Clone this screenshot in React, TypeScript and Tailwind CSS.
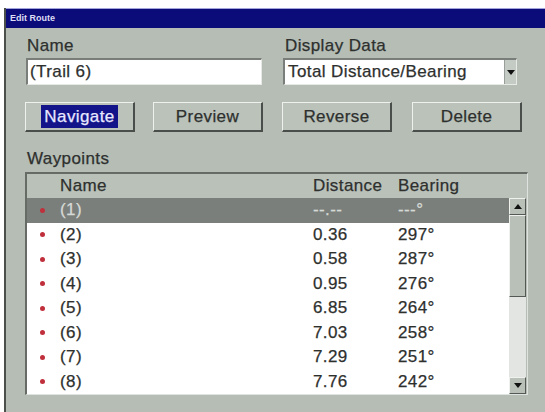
import React from 'react';

const waypoints = [
  { name: '(1)', dist: '--.--', bearing: '---°', selected: true },
  { name: '(2)', dist: '0.36', bearing: '297°' },
  { name: '(3)', dist: '0.58', bearing: '287°' },
  { name: '(4)', dist: '0.95', bearing: '276°' },
  { name: '(5)', dist: '6.85', bearing: '264°' },
  { name: '(6)', dist: '7.03', bearing: '258°' },
  { name: '(7)', dist: '7.29', bearing: '251°' },
  { name: '(8)', dist: '7.76', bearing: '242°' },
];

const Button = ({ label, focused }: { label: string; focused?: boolean }) => (
  <div className="flex h-[30px] w-[110px] items-center justify-center border-t border-l border-[#eef1ee] border-r-2 border-b-2 border-r-[#4a4e4a] border-b-[#4a4e4a] bg-[#bac2ba]">
    {focused ? (
      <span className="bg-[#14148a] px-[3px] leading-[23px] text-[#e8e8ff] [-webkit-text-stroke:0.25px_#e8e8ff]">{label}</span>
    ) : (
      <span className="leading-[23px]">{label}</span>
    )}
  </div>
);

const Arrow = ({ down }: { down?: boolean }) => (
  <svg width="8" height="5" viewBox="0 0 8 5">
    {down ? <path d="M0 0h8L4 5z" fill="#111" /> : <path d="M0 5h8L4 0z" fill="#111" />}
  </svg>
);

const ScrollButton = ({ down }: { down?: boolean }) => (
  <div className="flex h-[17px] items-center justify-center border-t border-l border-[#eef1ee] border-r border-b border-r-[#555955] border-b-[#555955] bg-[#b8c0b8]">
    <Arrow down={down} />
  </div>
);

export default function App() {
  return (
    <div className="h-[412px] w-[545px] overflow-hidden bg-white pt-[8px] pl-[4px] font-['Liberation_Sans',Arial,sans-serif]">
      <div className="flex h-full flex-col border-l-2 border-[#4b504b] bg-[#b5bdb5]">
        <div className="h-[20px] border-t border-[#a4a4dc] bg-[#0b0b7a] pl-[4px] text-[9px] font-bold leading-[19px] text-[#dcdcf4]">
          Edit Route
        </div>

        {/* dialog body: text is regular weight, thickened a little with a stroke */}
        <div className="pl-[19px] pr-[15px] pt-[8px] text-[17px] tracking-[0.4px] text-[#2e302e] [-webkit-text-stroke:0.25px_#2e302e]">
          <div className="flex">
            <div className="ml-[1px] w-[236px]">
              <div className="pl-[1px] leading-[20px]">Name</div>
              <div className="mt-[2px] h-[27px] border-t-2 border-l-2 border-[#7a7e7a] border-b border-r border-b-[#e6e9e6] border-r-[#e6e9e6] bg-white pl-[2px] leading-[24px]">
                (Trail 6)
              </div>
            </div>
            <div className="ml-[21px] w-[234px]">
              <div className="pl-[2px] leading-[20px]">Display Data</div>
              <div className="mt-[2px] flex h-[27px] border-t-2 border-l-2 border-[#7a7e7a] border-b border-r border-b-[#e6e9e6] border-r-[#e6e9e6] bg-white">
                <div className="flex-1 pl-[3px] leading-[24px]">Total Distance/Bearing</div>
                <div className="flex w-[12px] items-center justify-center border-l border-[#9a9e9a] bg-[#c4cac4]">
                  <Arrow down />
                </div>
              </div>
            </div>
          </div>

          <div className="mt-[17px] flex">
            <Button label="Navigate" focused />
            <div className="ml-[18px]">
              <Button label="Preview" />
            </div>
            <div className="ml-[19px]">
              <Button label="Reverse" />
            </div>
            <div className="ml-[20px]">
              <Button label="Delete" />
            </div>
          </div>

          <div className="mt-[17px] pl-[2px] leading-[20px]">Waypoints</div>

          <div className="mt-[3px] w-[503px] border-t-2 border-l-2 border-[#666b66] border-b border-r border-b-[#dfe3df] border-r-[#dfe3df]">
            <div className="flex h-[24px] items-center bg-[#b9c1b9] leading-[24px]">
              <div className="w-[286px] pl-[33px]">Name</div>
              <div className="w-[85px]">Distance</div>
              <div>Bearing</div>
            </div>
            <div className="flex">
              <div className="flex-1 bg-white">
                {waypoints.map((w) => (
                  <div
                    key={w.name}
                    className={`flex h-[24.5px] items-center leading-[24px] ${
                      w.selected ? 'bg-[#7b7f7b] text-[#d6dad6] [-webkit-text-stroke:0.25px_#d6dad6]' : ''
                    }`}
                  >
                    <div className="w-[33px]">
                      <div className="ml-[13px] h-[5px] w-[5px] rounded-full bg-[#c0303c]" />
                    </div>
                    <div className="w-[253px]">{w.name}</div>
                    <div className="w-[85px]">{w.dist}</div>
                    <div>{w.bearing}</div>
                  </div>
                ))}
              </div>
              <div className="mr-[1px] flex w-[17px] flex-col bg-[#e2e5e2]">
                <ScrollButton />
                <div className="h-[82px] border-t border-l border-[#eef1ee] border-r border-b border-r-[#555955] border-b-[#555955] bg-[#b8c0b8]" />
                <div className="flex-1" />
                <ScrollButton down />
              </div>
            </div>
          </div>
        </div>
      </div>
    </div>
  );
}
